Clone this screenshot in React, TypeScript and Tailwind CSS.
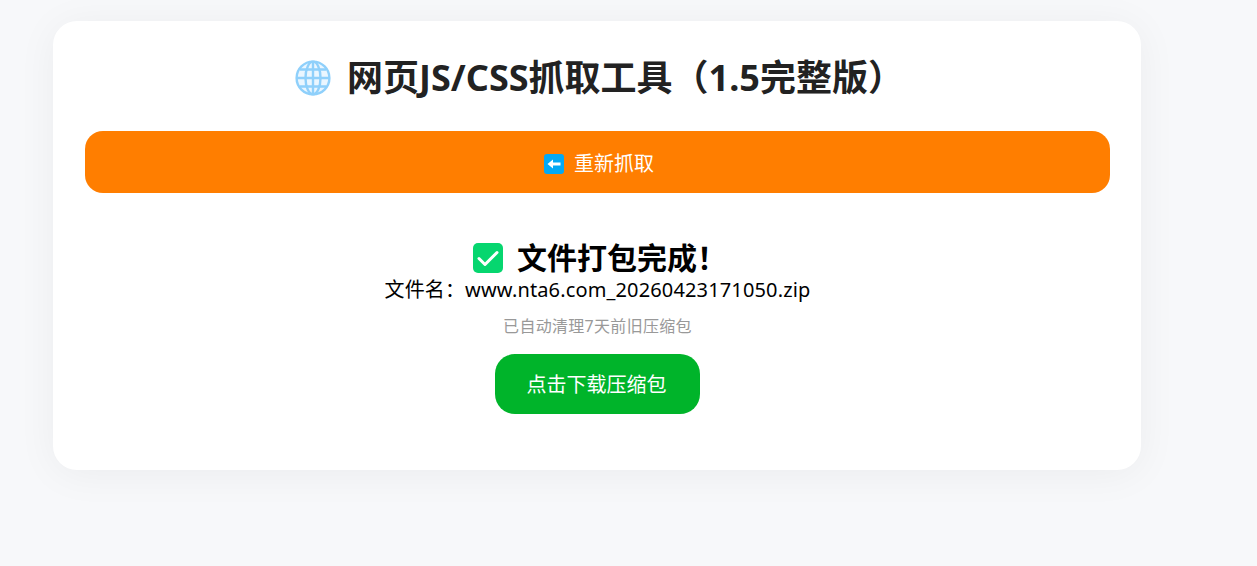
const font = "[font-family:'Noto_Sans','Noto_Sans_CJK_SC',sans-serif]";

function GlobeIcon() {
  return (
    <svg viewBox="0 0 36 36" className="h-[36px] w-[36px]" fill="none" stroke="#8fd0fb" strokeWidth="2.4">
      <circle cx="18" cy="18" r="16.4" fill="#eaf6ff" />
      <ellipse cx="18" cy="18" rx="7.5" ry="16.4" />
      <path d="M18 2v32M2 18h32M5 9.5h26M5 26.5h26" />
    </svg>
  );
}

function BackIcon() {
  return (
    <svg viewBox="0 0 20 20" className="h-[20px] w-[20px]">
      <rect width="20" height="20" rx="3" fill="#03a9f4" />
      <path d="M3.5 10 9 5.6v2.9h7.5v3H9v2.9z" fill="#fff" />
    </svg>
  );
}

function CheckIcon() {
  return (
    <svg viewBox="0 0 30 30" className="h-[30px] w-[30px]" fill="none">
      <rect width="30" height="30" rx="5" fill="#06d66f" />
      <path d="M6 15.5l6 6L24 9.5" stroke="#fff" strokeWidth="3" strokeLinecap="round" strokeLinejoin="round" />
    </svg>
  );
}

export default function App() {
  return (
    <div className={`min-h-[566px] bg-[#f7f8fa] pt-[21px] pl-[53px] ${font}`}>
      <div className="h-[449px] w-[1088px] rounded-[24px] bg-white pr-[31px] pl-[32px] pt-[32px] shadow-[0_4px_40px_rgba(0,0,0,0.05)]">
        <h1 className="flex h-[50px] items-center justify-center gap-[16px] pl-[4px] text-[36px] font-bold text-[#222]">
          <GlobeIcon />
          <span>网页JS/CSS抓取工具（1.5完整版）</span>
        </h1>
        <button className="mt-[28px] flex h-[62px] w-full items-center justify-center gap-[10px] rounded-[18px] bg-[#ff7e00] pt-[3px] pl-[3px] text-[20px] text-white">
          <BackIcon />
          <span>重新抓取</span>
        </button>
        <div className="mt-[44px] flex flex-col items-center">
          <div className="flex h-[42px] items-center gap-[14px] pl-[5px] text-[30px] leading-none font-bold text-black">
            <CheckIcon />
            <span>文件打包完成！</span>
          </div>
          <p className="-mt-[2px] h-[25px] text-[20px] leading-[25px] tracking-[0.14px] text-black">文件名：www.nta6.com_20260423171050.zip</p>
          <p className="mt-[12px] text-[16px] leading-[24px] tracking-[0.3px] text-[#999]">已自动清理7天前旧压缩包</p>
          <button className="mt-[16px] h-[60px] w-[205px] rounded-[20px] bg-[#00b42a] pt-[2px] pr-[2px] text-[20px] text-white">点击下载压缩包</button>
        </div>
      </div>
    </div>
  );
}
